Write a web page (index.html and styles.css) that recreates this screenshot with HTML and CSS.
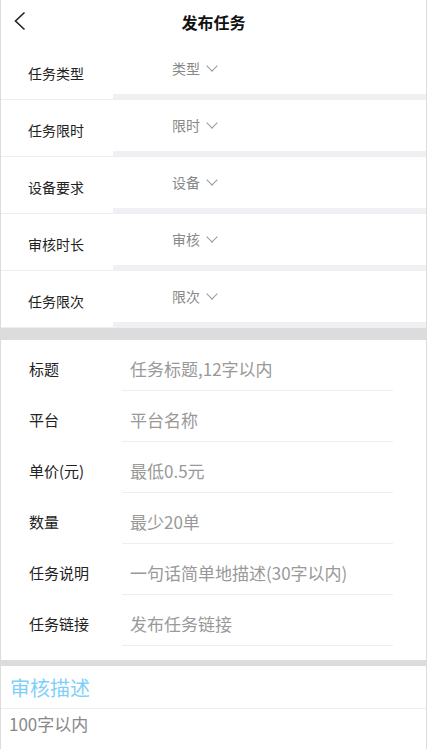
FILE: index.html
```html
<!DOCTYPE html>
<html lang="zh-CN">
<head>
    <meta charset="UTF-8">
    <meta name="viewport" content="width=device-width, initial-scale=1.0">
    <title>发布任务</title>
    <link rel="stylesheet" href="styles.css">
</head>
<body>
    <div class="page">
        <header class="top-bar">
            <button type="button" class="back-btn">
                <svg width="14" height="20" viewBox="0 0 14 20">
                    <polyline points="11.5,1.5 2.5,10 11.5,18.5" fill="none" stroke="#222" stroke-width="1.6"/>
                </svg>
            </button>
            <h1 class="page-title">发布任务</h1>
            <span></span>
        </header>

        <section class="pick-list">
            <div class="pick-row">
                <div class="pick-label">任务类型</div>
                <div class="pick-value">类型 <span class="arrow"></span></div>
            </div>
            <div class="pick-row">
                <div class="pick-label">任务限时</div>
                <div class="pick-value">限时 <span class="arrow"></span></div>
            </div>
            <div class="pick-row">
                <div class="pick-label">设备要求</div>
                <div class="pick-value">设备 <span class="arrow"></span></div>
            </div>
            <div class="pick-row">
                <div class="pick-label">审核时长</div>
                <div class="pick-value">审核 <span class="arrow"></span></div>
            </div>
            <div class="pick-row">
                <div class="pick-label">任务限次</div>
                <div class="pick-value">限次 <span class="arrow"></span></div>
            </div>
        </section>

        <section class="field-list">
            <div class="field-row">
                <label class="field-label" for="title">标题</label>
                <input class="field-input" id="title" type="text" placeholder="任务标题,12字以内">
            </div>
            <div class="field-row">
                <label class="field-label" for="platform">平台</label>
                <input class="field-input" id="platform" type="text" placeholder="平台名称">
            </div>
            <div class="field-row">
                <label class="field-label" for="price">单价(元)</label>
                <input class="field-input" id="price" type="text" placeholder="最低0.5元">
            </div>
            <div class="field-row">
                <label class="field-label" for="count">数量</label>
                <input class="field-input" id="count" type="text" placeholder="最少20单">
            </div>
            <div class="field-row">
                <label class="field-label" for="desc">任务说明</label>
                <input class="field-input" id="desc" type="text" placeholder="一句话简单地描述(30字以内)">
            </div>
            <div class="field-row">
                <label class="field-label" for="link">任务链接</label>
                <input class="field-input" id="link" type="text" placeholder="发布任务链接">
            </div>
        </section>

        <section class="review">
            <div class="review-title">审核描述</div>
            <textarea class="review-text" placeholder="100字以内"></textarea>
        </section>
    </div>
</body>
</html>
```

FILE: styles.css
```css
* {
    margin: 0;
    padding: 0;
    box-sizing: border-box;
    font-family: "Noto Sans CJK SC", "Noto Sans", sans-serif;
}

body {
    background: white;
}

.page {
    width: 427px;
    min-height: 749px;
    border-left: 1px solid #dcdcdc;
    border-right: 1px solid #dcdcdc;
    background: white;
}

.top-bar {
    height: 43px;
    display: grid;
    grid-template-columns: 40px 1fr 40px;
    align-items: center;
}

.back-btn {
    border: none;
    background: transparent;
    height: 43px;
    padding-left: 12px;
    padding-bottom: 1px;
    display: flex;
    align-items: center;
}

.page-title {
    text-align: center;
    font-size: 16px;
    font-weight: 700;
    color: #111;
    line-height: 20px;
}

.pick-row {
    display: flex;
    height: 57px;
    border-bottom: 1px solid #eeeeee;
}

.pick-label {
    width: 112px;
    padding-left: 27px;
    padding-top: 4px;
    display: flex;
    align-items: center;
    font-size: 14px;
    color: #222;
}

.pick-value {
    flex: 1;
    display: flex;
    align-items: center;
    padding-left: 59px;
    padding-bottom: 1px;
    border-bottom: 5px solid #efeff4;
    font-size: 14px;
    color: #888;
}

.arrow {
    width: 8px;
    height: 8px;
    margin-left: 8px;
    margin-top: -5px;
    border-right: 1px solid #999;
    border-bottom: 1px solid #999;
    transform: rotate(45deg);
}

.field-list {
    border-top: 12px solid #dcdcdc;
    padding-bottom: 14px;
}

.field-row {
    display: flex;
    height: 51px;
}

.field-label {
    width: 121px;
    padding-left: 28px;
    padding-top: 6px;
    display: flex;
    align-items: center;
    font-size: 15px;
    color: #222;
}

.field-input {
    width: 271px;
    height: 51px;
    border: none;
    border-bottom: 1px solid #eeeeee;
    padding: 6px 0 0 8px;
    font-size: 17px;
    color: #333;
    outline: none;
    background: transparent;
}

.field-input::placeholder {
    color: #999;
}

.review {
    border-top: 6px solid #dcdcdc;
}

.review-title {
    height: 43px;
    padding-left: 9px;
    display: flex;
    align-items: center;
    border-bottom: 1px solid #eeeeee;
    font-size: 20px;
    color: #7fcffb;
}

.review-text {
    width: 100%;
    height: 40px;
    border: none;
    resize: none;
    outline: none;
    padding: 1px 8px;
    font-size: 17px;
    line-height: 28px;
    color: #333;
    overflow: hidden;
}

.review-text::placeholder {
    color: #888;
}
```
